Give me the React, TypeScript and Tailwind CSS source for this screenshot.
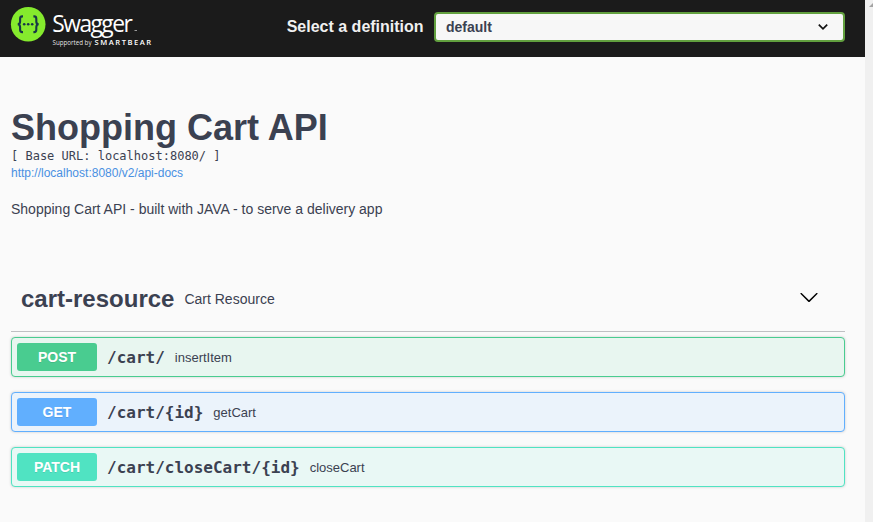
type Operation = {
  method: string;
  path: string;
  summary: string;
  box: string;
  badge: string;
};

const operations: Operation[] = [
  { method: "POST", path: "/cart/", summary: "insertItem", box: "border-[#49cc90] bg-[#e8f6f0]", badge: "bg-[#49cc90]" },
  { method: "GET", path: "/cart/{id}", summary: "getCart", box: "border-[#61affe] bg-[#ebf3fb]", badge: "bg-[#61affe]" },
  { method: "PATCH", path: "/cart/closeCart/{id}", summary: "closeCart", box: "border-[#50e3c2] bg-[#e9f8f5]", badge: "bg-[#50e3c2]" },
];

function Logo() {
  return (
    <svg width="160" height="57" viewBox="0 0 160 57" className="block shrink-0">
      <circle cx="28.2" cy="24.3" r="17.3" fill="#85ea2d" />
      <g fill="none" stroke="#173647" strokeWidth="2.1">
        <path d="M23 16.400h-.7c-1.700 0-2.200.9-2.200 2.400v2.600c0 1.800-.6 2.600-2.200 2.900c1.600.3 2.200 1.100 2.200 2.900v2.500c0 1.600.5 2.400 2.200 2.400h.7" />
        <path d="M33.400 16.400h.7c1.700 0 2.200.9 2.200 2.400v2.600c0 1.800.6 2.600 2.200 2.900c-1.600.3-2.200 1.100-2.200 2.900v2.500c0 1.600-.5 2.400-2.200 2.400h-.7" />
      </g>
      <g fill="#173647">
        <circle cx="24.200" cy="24.200" r="1.300" />
        <circle cx="28.200" cy="24.200" r="1.300" />
        <circle cx="32.200" cy="24.200" r="1.300" />
      </g>
      <g fill="#fff" fontFamily="'Open Sans', sans-serif">
        <text x="52.300" y="31.500" fontSize="22.800" textLength="80.500" lengthAdjust="spacing">Swagger</text>
        <text x="52.500" y="45.300" fontSize="6.200" fillOpacity="0.9" textLength="39" lengthAdjust="spacingAndGlyphs">Supported by</text>
        <text x="94.600" y="45.300" fontSize="7.600" fontWeight="600" textLength="56.500" lengthAdjust="spacing">SMARTBEAR</text>
      </g>
      <path d="M134.500 30.500h2.500" stroke="#999" strokeWidth="1" />
    </svg>
  );
}

function TopBar() {
  return (
    <header className="flex h-[57px] items-start bg-[#1b1b1b] pr-5">
      <Logo />
      <label className="flex flex-1 items-center justify-end pt-3">
        <span className="mr-[10.4px] text-base leading-[30px] font-bold text-[#f0f0f0]">Select a definition</span>
        <span className="flex h-[30px] w-[411px] items-center justify-between rounded border-2 border-[#62a03f] bg-[#f7f7f7] pr-[14px] pl-[10px] text-sm font-bold">
          default
          <svg width="12" height="8" viewBox="0 0 12 8" fill="none" stroke="#111" strokeWidth="1.7">
            <path d="M1.800 1.700L6 5.900l4.200-4.200" />
          </svg>
        </span>
      </label>
    </header>
  );
}

function OperationRow({ method, path, summary, box, badge }: Operation) {
  return (
    <div className={`flex h-10 items-center rounded border px-[5px] shadow-[0_0_3px_rgba(0,0,0,0.19)] ${box}`}>
      <span className={`h-7 w-20 rounded-[3px] text-center text-sm leading-7 font-bold text-white [text-shadow:0_1px_0_rgba(0,0,0,0.1)] ${badge}`}>
        {method}
      </span>
      <span className="px-2.5 pt-[2px] font-['DejaVu_Sans_Mono',monospace] text-base leading-none font-semibold">{path}</span>
      <span className="text-[13px] leading-none">{summary}</span>
    </div>
  );
}

export default function App() {
  return (
    <div className="flex h-[522px] w-[873px] overflow-hidden bg-[#fafafa] font-['Liberation_Sans',Arial,sans-serif] text-[#3b4151]">
      <div className="w-[865px]">
        <TopBar />
        <main className="pr-5 pl-[11px]">
          <section className="pt-[50px]">
            <h1 className="text-4xl leading-[41px] font-bold">Shopping Cart API</h1>
            <pre className="pt-px font-['DejaVu_Sans_Mono',monospace] text-xs leading-[15px]">[ Base URL: localhost:8080/ ]</pre>
            <a className="mt-[2px] block text-xs leading-[14px] text-[#4990e2]">http://localhost:8080/v2/api-docs</a>
            <p className="mt-[21px] text-sm leading-4">Shopping Cart API - built with JAVA - to serve a delivery app</p>
          </section>
          <section className="mt-[49px]">
            <div className="flex h-[66px] items-center border-b border-[#bfc0c3] pr-[26px] pl-2.5">
              <h3 className="text-2xl font-bold">cart-resource</h3>
              <span className="flex-1 pl-2.5 text-sm">Cart Resource</span>
              <svg width="20" height="20" viewBox="0 0 20 20" className="-mt-[3px]">
                <path d="M17.418 6.109c.272-.268.709-.268.979 0s.271.701 0 .969l-7.908 7.830c-.270.268-.707.268-.979 0l-7.908-7.830c-.270-.268-.270-.701 0-.969.271-.268.709-.268.979 0L10 13.250l7.418-7.141z" />
              </svg>
            </div>
            <div className="flex flex-col gap-[15px] pt-[5px]">
              {operations.map((op) => (
                <OperationRow key={op.path} {...op} />
              ))}
            </div>
          </section>
        </main>
      </div>
      <div className="w-2 bg-[#f0f0f0]">
        <svg width="8" height="16" viewBox="0 0 8 16">
          <path d="M4 7l4-4v4z" fill="#a3a3a3" />
        </svg>
      </div>
    </div>
  );
}
